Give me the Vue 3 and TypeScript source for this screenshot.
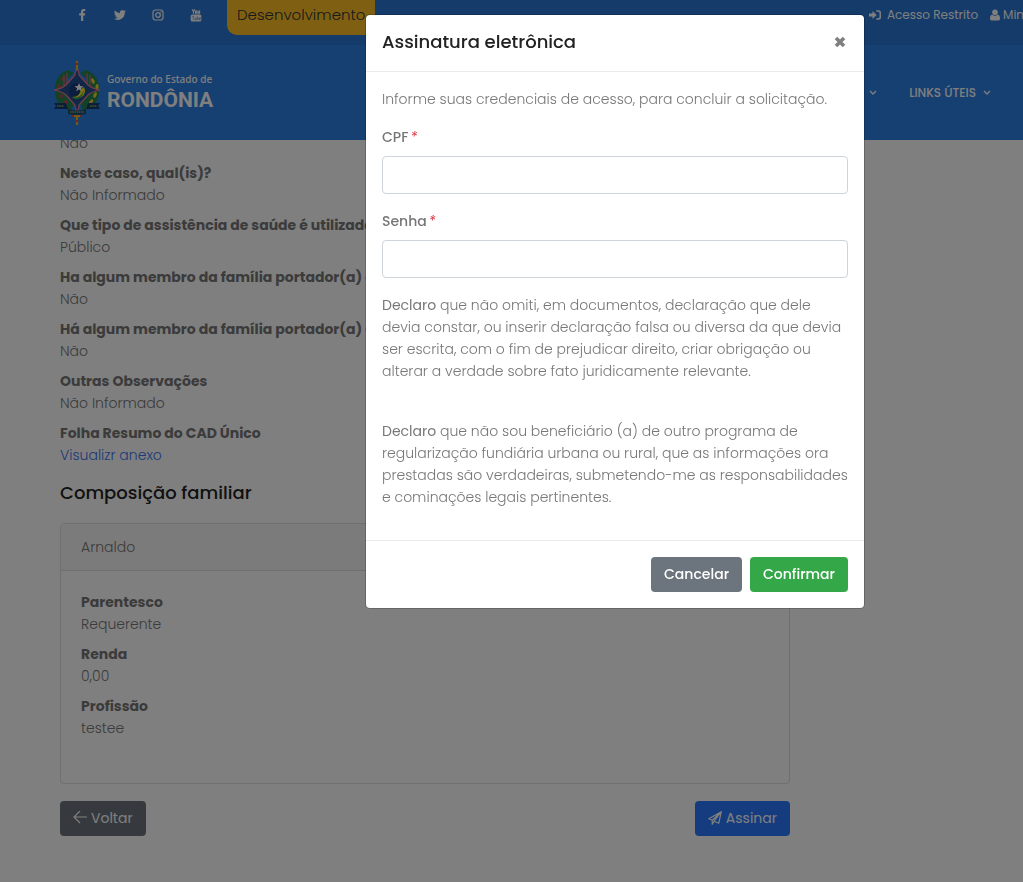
<script setup lang="ts">
import { ref } from 'vue'

interface Field {
  label: string
  value: string
  link?: boolean
}

const cpf = ref('')
const senha = ref('')

const fields: Field[] = [
  { label: 'Neste caso, qual(is)?', value: 'Não Informado' },
  { label: 'Que tipo de assistência de saúde é utilizada?', value: 'Público' },
  { label: 'Ha algum membro da família portador(a) de', value: 'Não' },
  { label: 'Há algum membro da família portador(a) de', value: 'Não' },
  { label: 'Outras Observações', value: 'Não Informado' },
  { label: 'Folha Resumo do CAD Único', value: 'Visualizr anexo', link: true },
]

const member: Field[] = [
  { label: 'Parentesco', value: 'Requerente' },
  { label: 'Renda', value: '0,00' },
  { label: 'Profissão', value: 'testee' },
]
</script>

<template>
  <div class="page">
    <header class="site-header">
      <div class="topbar">
        <nav class="social" aria-label="Redes sociais">
          <a href="#" aria-label="Facebook">
            <svg width="12" height="12" viewBox="0 0 12 12"><path fill="currentColor" d="M9.300.1v1.900H8.200c-.8 0-1 .4-1 1v1.300h2L9 6.400H7.200V12H5V6.400H3.200V4.300H5V2.700C5 .9 6.100 0 7.700 0c.8 0 1.400.05 1.600.1z" /></svg>
          </a>
          <a href="#" aria-label="Twitter">
            <svg width="12" height="12" viewBox="0 0 24 24"><path fill="currentColor" d="M24 4.600a10 10 0 0 1-2.800.8 5 5 0 0 0 2.100-2.700 10 10 0 0 1-3.100 1.200 4.900 4.900 0 0 0-8.400 4.500A14 14 0 0 1 1.700 3.200a4.900 4.900 0 0 0 1.500 6.500 5 5 0 0 1-2.200-.6 4.900 4.900 0 0 0 3.900 4.900 5 5 0 0 1-2.200.1 4.900 4.900 0 0 0 4.600 3.400A9.900 9.900 0 0 1 0 19.500 14 14 0 0 0 21.500 7.100 10 10 0 0 0 24 4.600z" /></svg>
          </a>
          <a href="#" aria-label="Instagram">
            <svg width="12" height="12" viewBox="0 0 12 12" fill="none" stroke="currentColor"><rect x="1" y="1" width="10" height="10" rx="2.500" stroke-width="1.200" /><circle cx="6" cy="6" r="2.300" stroke-width="1.300" /><circle cx="8.900" cy="3.100" r=".35" stroke-width=".7" /></svg>
          </a>
          <a href="#" aria-label="YouTube">
            <svg width="12" height="13" viewBox="0 0 12 13"><rect x=".7" y="5.500" width="10.600" height="7" rx="1.500" fill="currentColor" /><path d="M2.200.2l1.300 2.600v2M4.800.2L3.500 2.800M5.500 2h1.300v2.300H5.500zM8.200 1.600v2.700h1.400V1.600" fill="none" stroke="currentColor" stroke-width="1.100" /><path d="M2.200 7.300h2M3.200 7.300v3.800M5 8.500v2.400h1V8.500M7.200 7.200v3.700h1V8.700h-1M10.500 10.600H9.400V8.800h1.100v.9H9.400" fill="none" stroke="#2876d2" stroke-width=".5" /></svg>
          </a>
        </nav>
        <span class="env">Desenvolvimento</span>
        <nav class="account" aria-label="Conta">
          <a href="#">
            <svg width="12" height="10" viewBox="0 0 12 10"><path fill="currentColor" d="M0 3.400h3.500V1.100L7.600 5 3.500 8.900V6.600H0zM7.300.3h2.200A2.500 2.500 0 0 1 12 2.800v4.400a2.500 2.500 0 0 1-2.500 2.500H7.300V8.300h2c.7 0 1.200-.5 1.200-1.200V2.900c0-.7-.5-1.200-1.200-1.200h-2z" /></svg>
            <span class="restricted">Acesso Restrito</span>
          </a>
          <a href="#">
            <svg width="10" height="12" viewBox="0 0 10 12"><circle cx="5" cy="3.300" r="2.800" fill="currentColor" /><path fill="currentColor" d="M2.300 5.500a4 4 0 0 0 5.400 0C9.300 5.700 10 7.200 10 9.500c0 1.400-.8 2-1.900 2H1.900C.8 11.500 0 10.900 0 9.500c0-2.300.7-3.800 2.300-4z" /></svg>
            Min
          </a>
        </nav>
      </div>
      <div class="navbar">
        <a class="brand" href="#">
          <svg width="48" height="66" viewBox="0 0 48 66" aria-hidden="true">
            <path d="M15 10C6 13 1 21 2 31c0 7 3 13 8 17l8 3 3-8-9-9 2-15 7-6zM33 10c9 3 14 11 13 21 0 7-3 13-8 17l-8 3-3-8 9-9-2-15-7-6z" fill="#278551" />
            <g fill="#b84b50"><circle cx="10" cy="19" r="2" /><circle cx="6" cy="26" r="2" /><circle cx="8" cy="36" r="2" /><circle cx="13" cy="42" r="2" /><circle cx="12" cy="25" r="1.500" /></g>
            <g fill="#f1d631"><ellipse cx="40" cy="21" rx="1.500" ry="3" transform="rotate(-25 40 21)" /><ellipse cx="44" cy="27" rx="1.500" ry="3" /><ellipse cx="42" cy="35" rx="1.500" ry="3" transform="rotate(25 42 35)" /><ellipse cx="38" cy="42" rx="1.500" ry="3" transform="rotate(35 38 42)" /></g>
            <path d="M11 15v14M14 13v13M34 13v13M37 15v14" stroke="#c66a86" stroke-width="1.300" />
            <path d="M24 8c1 3 2 4 2 7l9 10c3 3 7 4 12 5-5 1-9 2-12 5l-9 10c0 3-1 4-2 7-1-3-2-4-2-7l-9-10c-3-3-7-4-12-5 5-1 9-2 12-5l9-10c0-3 1-4 2-7z" fill="#204e91" stroke="#ed7797" stroke-width="1.200" />
            <circle cx="24" cy="31" r="8" fill="#193c7b" />
            <path d="M31 27a8 8 0 0 1-12 10c6 0 8-3 9-8z" fill="#efe31c" /><path d="M20 37c6 2 10-3 11-8-1 7-4 11-9 10z" fill="#2f995d" />
            <path d="M26 23l1.300 3 3.200.2-2.500 2 .8 3.100-2.800-1.700-2.700 1.700.8-3.100-2.500-2 3.200-.2z" fill="#fff" />
            <path d="M24 1v9M24 54v11M19 56h10" stroke="#f0ad27" stroke-width="2.200" /><path d="M24 3v2M24 60v2M19 56h2M27 56h2" stroke="#df4b3d" stroke-width="2.200" />
            <path d="M1 43h12l2 6H1l2-3zM47 43H35l-2 6h14l-2-3z" fill="#123d72" /><path d="M15 49q9 3 18 0v5q-9 2-18 0z" fill="#194e73" />
            <path d="M4 46h7M37 46h7M17 52h14" stroke="#93a653" stroke-width="1.500" stroke-dasharray="1.500 .7" />
          </svg>
          <span class="brand-text"><span class="gov">Governo do Estado de</span><span class="state">RONDÔNIA</span></span>
        </a>
        <nav class="menu" aria-label="Principal">
          <a href="#" aria-label="Mais opções"><svg width="8" height="6" viewBox="0 0 8 6"><path d="M1 1l3 3 3-3" fill="none" stroke="currentColor" stroke-width="1.300" /></svg></a>
          <a href="#">LINKS ÚTEIS <svg width="8" height="6" viewBox="0 0 8 6"><path d="M1 1l3 3 3-3" fill="none" stroke="currentColor" stroke-width="1.300" /></svg></a>
        </nav>
      </div>
    </header>

    <main class="content">
      <p class="previous">Não</p>
      <dl class="fields">
        <div v-for="(f, i) in fields" :key="i">
          <dt>{{ f.label }}</dt>
          <dd><a v-if="f.link" href="#">{{ f.value }}</a><template v-else>{{ f.value }}</template></dd>
        </div>
      </dl>
      <h2>Composição familiar</h2>
      <section class="card">
        <div class="card-head">Arnaldo</div>
        <dl class="fields card-body">
          <div v-for="f in member" :key="f.label">
            <dt>{{ f.label }}</dt>
            <dd>{{ f.value }}</dd>
          </div>
        </dl>
      </section>
      <div class="actions">
        <button type="button" class="btn grey">
          <svg width="14" height="14" viewBox="0 0 14 14"><path d="M14 6H1M7 0L1 6l6 6" fill="none" stroke="currentColor" stroke-width="1.200" /></svg>
          Voltar
        </button>
        <button type="button" class="btn blue">
          <svg width="14" height="14" viewBox="0 0 14 14"><path d="M13.300.7L.8 7.800l3.400 1.500L13.300.7zM13.300.7L6 10.200l4.800 2L13.300.7zM4.200 9.300v4L6 10.200" fill="none" stroke="currentColor" stroke-width="1.200" stroke-linejoin="round" /></svg>
          Assinar
        </button>
      </div>
    </main>

    <div class="backdrop">
      <form class="modal" role="dialog" aria-modal="true" aria-labelledby="modal-title" @submit.prevent>
        <div class="modal-head">
          <h1 id="modal-title">Assinatura eletrônica</h1>
          <button type="button" class="close" aria-label="Fechar">
            <svg width="12" height="12" viewBox="0 0 12 12"><path d="M2 2l8 8M10 2l-8 8" stroke="currentColor" stroke-width="3.600" /></svg>
          </button>
        </div>
        <div class="modal-body">
          <p>Informe suas credenciais de acesso, para concluir a solicitação.</p>
          <div class="group">
            <label for="cpf">CPF<span class="req">*</span></label>
            <input id="cpf" v-model="cpf" type="text" />
          </div>
          <div class="group">
            <label for="senha">Senha<span class="req">*</span></label>
            <input id="senha" v-model="senha" type="password" />
          </div>
          <p class="statement">
            <b>Declaro</b> que não omiti, em documentos, declaração que dele<br />
            devia constar, ou inserir declaração falsa ou diversa da que devia<br />
            ser escrita, com o fim de prejudicar direito, criar obrigação ou<br />
            alterar a verdade sobre fato juridicamente relevante.
          </p>
          <p class="statement">
            <b>Declaro</b> que não sou beneficiário (a) de outro programa de<br />
            regularização fundiária urbana ou rural, que as informações ora<br />
            prestadas são verdadeiras, submetendo-me as responsabilidades<br />
            e cominações legais pertinentes.
          </p>
        </div>
        <div class="modal-foot">
          <button type="button" class="btn grey strong">Cancelar</button>
          <button type="submit" class="btn green strong">Confirmar</button>
        </div>
      </form>
    </div>
  </div>
</template>

<style>
body {
  margin: 0;
  background: #fff;
}
</style>

<style scoped>
* {
  box-sizing: border-box;
}
.page {
  min-height: 100vh;
  overflow: hidden;
  background: #fff;
  color: #777;
  font: 300 14px/22px Poppins, Inter, "Open Sans", sans-serif;
}
a {
  color: inherit;
  text-decoration: none;
}
p,
h1,
h2,
dl,
dd {
  margin: 0;
}
svg {
  display: block;
  flex: none;
}
.site-header {
  position: relative;
  z-index: 1;
  color: #fff;
  background: #2c80e2;
}
.topbar {
  display: flex;
  align-items: flex-start;
  height: 45px;
  background: #2876d2;
}
.social {
  display: flex;
  gap: 26px;
  padding: 9px 25px 0 76px;
}
.env {
  height: 35px;
  padding: 4px 10px;
  border-radius: 0 0 10px 10px;
  background: #ffc127;
  color: #333;
  font-size: 15px;
}
.account {
  display: flex;
  gap: 12px;
  width: 154px;
  margin-left: auto;
  padding-top: 4px;
  white-space: nowrap;
  font-size: 12px;
  font-weight: 400;
}
.account a {
  display: flex;
  align-items: center;
  gap: 3px;
}
.restricted {
  padding-left: 3px;
}
.navbar {
  display: flex;
  align-items: center;
  justify-content: space-between;
  height: 95px;
  padding: 0 32px 0 53px;
}
.brand {
  display: flex;
  align-items: center;
  gap: 6px;
}
.brand-text {
  display: flex;
  flex-direction: column;
  padding-bottom: 2px;
}
.gov {
  font: 500 10px/16px "Noto Sans", sans-serif;
}
.state {
  font: 700 21px/26px Roboto, sans-serif;
}
.menu {
  display: flex;
  gap: 32px;
  font-size: 12px;
  font-weight: 500;
}
.menu a {
  display: flex;
  align-items: center;
  gap: 7px;
}
.content {
  width: min(730px, 72%);
  margin: -8px 0 45px 60px;
}
.previous {
  margin-bottom: 8px;
}
.fields {
  display: grid;
  gap: 8px;
}
dt {
  font-weight: 700;
  white-space: nowrap;
}
dd a {
  color: #3b74f0;
}
h2 {
  margin: 16px 0 19px;
  color: #222;
  font-size: 18px;
  font-weight: 500;
  line-height: 22px;
}
.card {
  border: 1px solid #dfdfdf;
  border-radius: 4px;
}
.card-head {
  padding: 12px 20px;
  border-bottom: 1px solid #dfdfdf;
  background: #f7f7f7;
}
.card-body {
  padding: 20px 20px 44px;
}
.actions {
  display: flex;
  align-items: center;
  justify-content: space-between;
  margin-top: 17px;
}
.btn {
  display: flex;
  align-items: center;
  justify-content: center;
  gap: 4px;
  height: 35px;
  padding: 6px 13px 7px;
  border: 0;
  border-radius: 4px;
  color: #fff;
  font: inherit;
  font-weight: 400;
}
.strong {
  font-weight: 500;
}
.grey {
  background: #6c757d;
}
.blue {
  background: #2879ff;
}
.green {
  background: #34a849;
}
.backdrop {
  position: fixed;
  inset: 0;
  z-index: 2;
  display: flex;
  align-items: flex-start;
  justify-content: flex-end;
  padding: 15px 159px 15px 15px;
  background: rgba(0, 0, 0, 0.5);
}
.modal {
  width: 498px;
  max-width: 100%;
  border-radius: 4px;
  background: #fff;
  box-shadow: 0 0 0 1px rgba(0, 0, 0, 0.2);
}
.modal-head {
  display: flex;
  align-items: center;
  justify-content: space-between;
  height: 57px;
  padding: 0 16px 2px;
  border-bottom: 1px solid #e9ecef;
}
h1 {
  color: #222;
  font-size: 18px;
  font-weight: 500;
}
.close {
  padding: 2px;
  border: 0;
  background: none;
  color: #7f7f7f;
}
.modal-body {
  display: grid;
  gap: 16px;
  padding: 16px;
}
.group {
  display: grid;
  gap: 8px;
}
label {
  font-weight: 500;
}
.req {
  padding-left: 2px;
  color: #dc3545;
  font-style: italic;
  font-weight: 400;
}
input {
  width: 100%;
  height: 38px;
  padding: 6px 12px;
  border: 1px solid #ced4da;
  border-radius: 4px;
  background: #fff;
  font: inherit;
}
.statement {
  white-space: nowrap;
}
.statement + .statement {
  margin-top: 22px;
  margin-bottom: 16px;
}
.statement b {
  font-weight: 400;
}
.modal-foot {
  display: flex;
  justify-content: flex-end;
  gap: 8px;
  padding: 16px;
  border-top: 1px solid #e9ecef;
}
</style>
